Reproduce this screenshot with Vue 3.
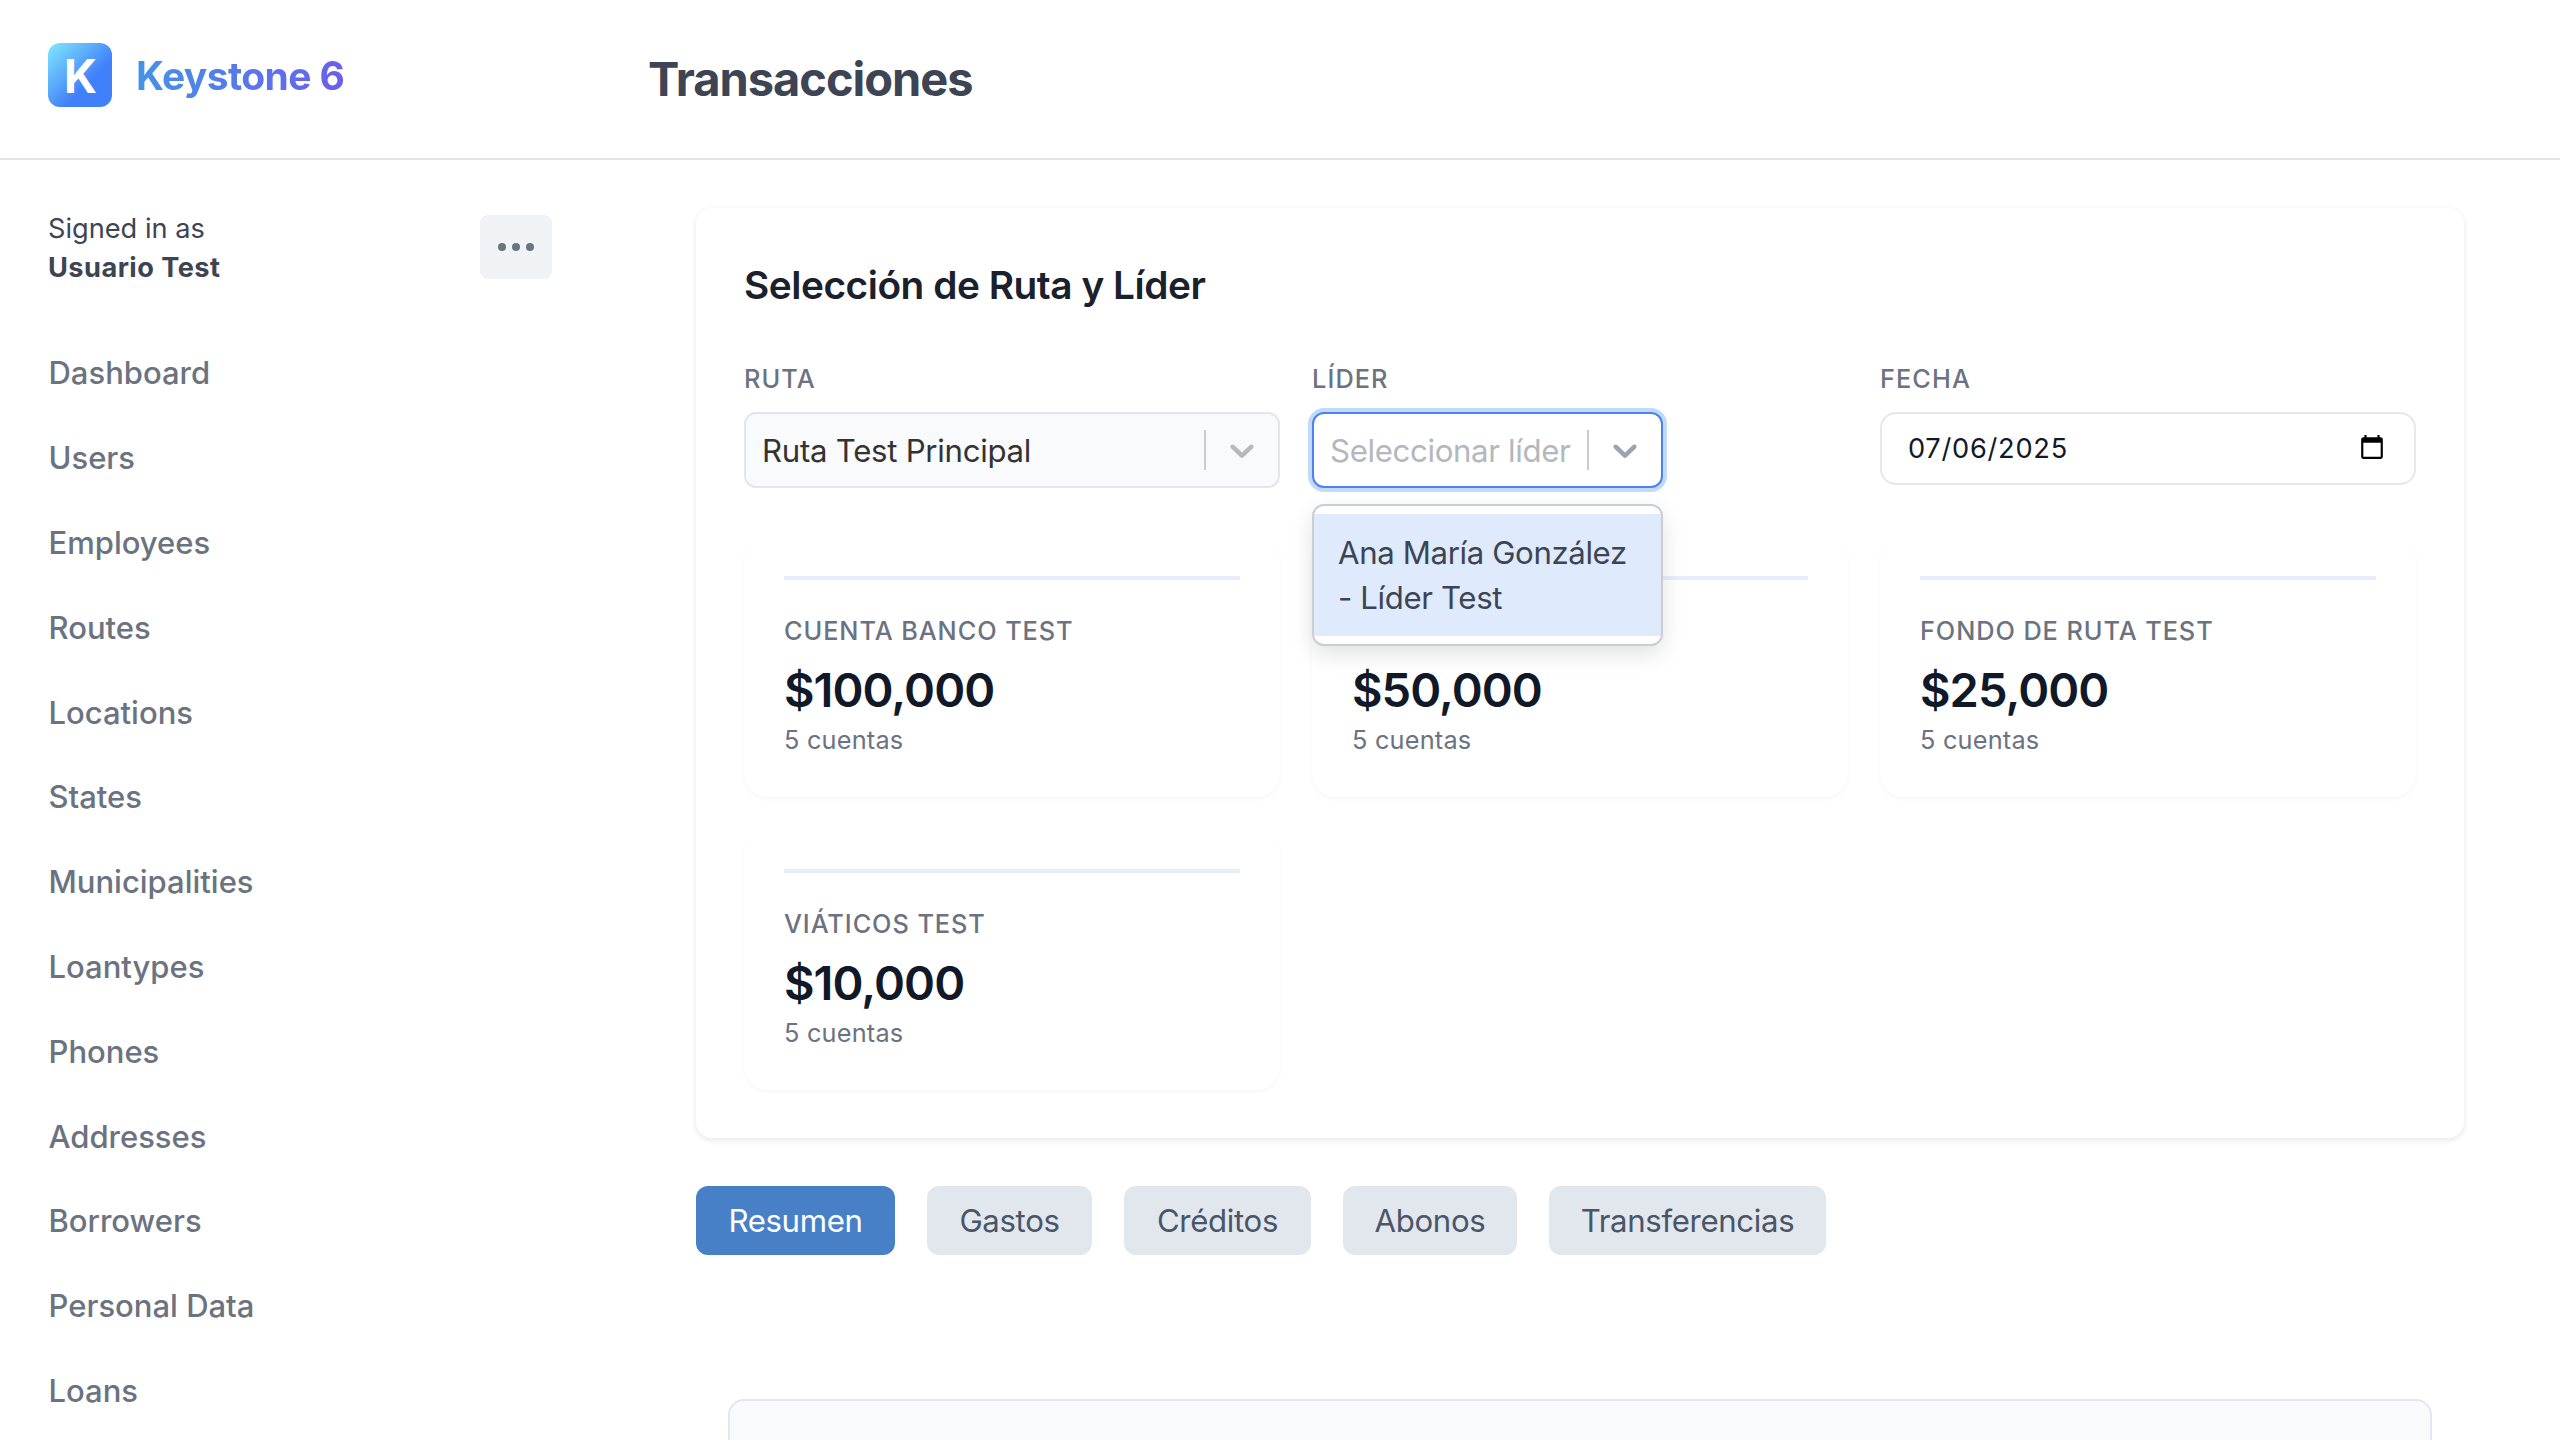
<script setup>
import { ref } from 'vue'

const navItems = [
  'Dashboard', 'Users', 'Employees', 'Routes', 'Locations', 'States', 'Municipalities',
  'Loantypes', 'Phones', 'Addresses', 'Borrowers', 'Personal Data', 'Loans',
]

const accounts = [
  { name: 'Cuenta Banco Test', amount: '$100,000', count: 5 },
  { name: 'Caja Efectivo Test', amount: '$50,000', count: 5 },
  { name: 'Fondo de Ruta Test', amount: '$25,000', count: 5 },
  { name: 'Viáticos Test', amount: '$10,000', count: 5 },
]

const tabs = [
  { label: 'Resumen', width: 199 },
  { label: 'Gastos', width: 165 },
  { label: 'Créditos', width: 187 },
  { label: 'Abonos', width: 174 },
  { label: 'Transferencias', width: 277 },
]
const activeTab = ref('Resumen')
</script>

<template>
  <div class="page">
    <header class="header">
      <div class="brand">
        <div class="logo"><span>K</span></div>
        <span class="brand-name">Keystone 6</span>
      </div>
      <h1 class="page-title">Transacciones</h1>
    </header>

    <div class="body">
      <aside class="sidebar">
        <div class="user">
          <div class="user-text">
            <span>Signed in as</span>
            <strong>Usuario Test</strong>
          </div>
          <button class="more" aria-label="Links and signout">
            <svg width="36" height="8" viewBox="0 0 36 8">
              <circle cx="4" cy="4" r="4" /><circle cx="18" cy="4" r="4" /><circle cx="32" cy="4" r="4" />
            </svg>
          </button>
        </div>
        <nav class="nav">
          <a v-for="item in navItems" :key="item">{{ item }}</a>
        </nav>
      </aside>

      <main class="main">
        <section class="card">
          <h2>Selección de Ruta y Líder</h2>

          <div class="grid filters">
            <div class="field">
              <label>RUTA</label>
              <div class="select filled">
                <span class="value">Ruta Test Principal</span>
                <span class="separator"></span>
                <span class="indicator">
                  <svg width="40" height="40" viewBox="0 0 20 20"><path d="M4.516 7.548c0.436-0.446 1.043-0.481 1.576 0l3.908 3.747 3.908-3.747c0.533-0.481 1.141-0.446 1.574 0 0.436 0.445 0.408 1.197 0 1.615-0.406 0.418-4.695 4.502-4.695 4.502-0.217 0.223-0.502 0.335-0.787 0.335s-0.57-0.112-0.789-0.335c0 0-4.287-4.084-4.695-4.502s-0.436-1.17 0-1.615z" /></svg>
                </span>
              </div>
            </div>

            <div class="field">
              <label>LÍDER</label>
              <div class="select focused">
                <span class="value placeholder">Seleccionar líder</span>
                <span class="separator"></span>
                <span class="indicator">
                  <svg width="40" height="40" viewBox="0 0 20 20"><path d="M4.516 7.548c0.436-0.446 1.043-0.481 1.576 0l3.908 3.747 3.908-3.747c0.533-0.481 1.141-0.446 1.574 0 0.436 0.445 0.408 1.197 0 1.615-0.406 0.418-4.695 4.502-4.695 4.502-0.217 0.223-0.502 0.335-0.787 0.335s-0.57-0.112-0.789-0.335c0 0-4.287-4.084-4.695-4.502s-0.436-1.17 0-1.615z" /></svg>
                </span>
                <div class="menu">
                  <div class="option">Ana María González - Líder Test</div>
                </div>
              </div>
            </div>

            <div class="field">
              <label>FECHA</label>
              <div class="date">
                <span>07/06/2025</span>
                <svg width="26" height="26" viewBox="0 0 24 24"><path d="M20 3h-1V1h-2v2H7V1H5v2H4c-1.1 0-2 .9-2 2v16c0 1.1.9 2 2 2h16c1.1 0 2-.9 2-2V5c0-1.1-.9-2-2-2zm0 18H4V8h16v13z" /></svg>
              </div>
            </div>
          </div>

          <div class="grid">
            <article v-for="a in accounts" :key="a.name" class="account">
              <div class="bar"></div>
              <div class="account-name">{{ a.name }}</div>
              <div class="amount">{{ a.amount }}</div>
              <div class="count">{{ a.count }} cuentas</div>
            </article>
          </div>
        </section>

        <div class="tabs">
          <button
            v-for="t in tabs"
            :key="t.label"
            class="tab"
            :class="{ active: t.label === activeTab }"
            :style="{ width: t.width + 'px' }"
            @click="activeTab = t.label"
          >{{ t.label }}</button>
        </div>

        <section class="panel"></section>
      </main>
    </div>
  </div>
</template>

<style>
body {
  background: #fff;
  overflow: hidden;
}
</style>

<style scoped>
.page {
  width: 2560px;
  height: 1440px;
  overflow: hidden;
  display: flex;
  flex-direction: column;
  font-family: Inter, "Liberation Sans", sans-serif;
  color: #3d4454;
  background: #fff;
}
.page * {
  box-sizing: border-box;
}
button {
  border: 0;
  padding: 0;
  font: inherit;
}
.header {
  height: 160px;
  flex: none;
  display: flex;
  align-items: center;
  border-bottom: 2px solid #e1e5e9;
}
.brand {
  width: 600px;
  padding: 0 0 8px 48px;
  display: flex;
  align-items: center;
  gap: 24px;
}
.logo {
  width: 64px;
  height: 64px;
  border-radius: 12px;
  background: linear-gradient(135deg, #7fe6fb 2%, #4180fb 63%);
  color: #fff;
  font-size: 46px;
  font-weight: 700;
  line-height: 66px;
  padding-left: 16px;
}
.brand-name {
  font-size: 39px;
  font-weight: 700;
  line-height: 48px;
  letter-spacing: -0.6px;
  padding-top: 2px;
  background: linear-gradient(90deg, #4493e6, #6a5fec);
  -webkit-background-clip: text;
  background-clip: text;
  color: transparent;
}
.page-title {
  margin: 0 0 0 48px;
  font-size: 47px;
  font-weight: 700;
  line-height: 56px;
  letter-spacing: -1.02px;
}
.body {
  flex: 1;
  min-height: 0;
  display: flex;
}
.sidebar {
  width: 600px;
  flex: none;
}
.user {
  width: 552px;
  padding: 48px 0 0 48px;
  display: flex;
  justify-content: space-between;
  align-items: center;
}
.user-text {
  display: flex;
  flex-direction: column;
  padding-top: 1px;
  font-size: 27.2px;
  line-height: 39px;
  height: 78px;
}
.user-text strong {
  letter-spacing: 0.45px;
}
.more {
  width: 72px;
  height: 64px;
  border-radius: 8px;
  background: #eff3f6;
  display: flex;
  align-items: center;
  justify-content: center;
}
.more svg {
  fill: #6b7280;
}
.nav {
  padding: 45.4px 0 0 48.5px;
  display: flex;
  flex-direction: column;
}
.nav a {
  height: 84.8px;
  line-height: 84.8px;
  font-size: 31px;
  font-weight: 500;
  color: #6b7280;
}
.main {
  width: 1768px;
  margin-left: 96px;
  padding-top: 48px;
}
.card {
  height: 930px;
  padding: 48px;
  border-radius: 16px;
  background: #fff;
  box-shadow: 0 2px 6px rgba(0, 0, 0, 0.1);
}
.card h2 {
  margin: 0 0 55px;
  font-size: 38.8px;
  font-weight: 600;
  line-height: 58px;
  letter-spacing: -0.46px;
  color: #1a202c;
}
.grid {
  display: grid;
  grid-template-columns: repeat(3, 536px);
  gap: 32px;
}
.filters {
  margin-bottom: 48px;
}
.field label {
  display: block;
  height: 43px;
  line-height: 20px;
  font-size: 25.3px;
  font-weight: 500;
  letter-spacing: 1.1px;
  color: #6b7280;
}
.select {
  position: relative;
  height: 76px;
  display: flex;
  align-items: center;
  border: 2px solid #e2e5e9;
  border-radius: 12px;
  background: #fff;
}
.select.filled {
  background: #f9fafc;
}
.select.focused {
  width: 351px;
  border-color: #4b82ee;
  box-shadow: 0 0 0 4px #c2dafa;
}
.value {
  flex: 1;
  padding: 2px 0 0 16px;
  font-size: 31.2px;
  line-height: 44px;
  letter-spacing: -0.28px;
  color: #333;
  white-space: nowrap;
}
.placeholder {
  letter-spacing: -0.35px;
  color: #b3b7be;
}
.separator {
  width: 2px;
  height: 40px;
  background: #ccc;
}
.indicator {
  padding: 0 16px;
  height: 40px;
}
.indicator svg {
  fill: #b5b9c0;
}
.focused .indicator svg {
  fill: #9ca3af;
}
.menu {
  position: absolute;
  z-index: 2;
  top: 90px;
  left: -2px;
  width: 351px;
  padding: 8px 0;
  border: 2px solid #c9cdd4;
  border-radius: 12px;
  background: #fff;
  box-shadow: 0 8px 22px rgba(0, 0, 0, 0.12);
}
.option {
  padding: 17px 24px 15px;
  background: #dfeafd;
  font-size: 31.2px;
  line-height: 44.8px;
  letter-spacing: -0.38px;
  color: #3d4454;
}
.date {
  height: 73px;
  padding: 0 29px 0 26px;
  display: flex;
  align-items: center;
  justify-content: space-between;
  border: 2px solid #e5e7eb;
  border-radius: 16px;
  font-size: 27.2px;
  letter-spacing: 0.75px;
  color: #111827;
}
.date svg {
  fill: #000;
  margin-top: -3px;
}
.account {
  height: 261px;
  padding: 40px;
  border-radius: 24px;
  background: #fff;
  box-shadow: 0 2px 4px rgba(0, 0, 0, 0.04);
}
.bar {
  height: 4px;
  margin-bottom: 33.5px;
  background: #e8eef9;
}
.account-name {
  font-size: 25.3px;
  font-weight: 500;
  line-height: 34px;
  letter-spacing: 0.93px;
  text-transform: uppercase;
  color: #6b7280;
  margin-bottom: 18.5px;
}
.amount {
  font-size: 47px;
  font-weight: 600;
  line-height: 48px;
  letter-spacing: -0.95px;
  color: #111827;
  margin-bottom: 9px;
}
.count {
  font-size: 25.3px;
  line-height: 34px;
  letter-spacing: 0.2px;
  color: #6b7280;
}
.tabs {
  margin-top: 48px;
  display: flex;
  gap: 32px;
}
.tab {
  height: 69px;
  border-radius: 12px;
  background: #e2e7ee;
  color: #4a5568;
  font-size: 31.2px;
  letter-spacing: -0.35px;
  text-align: center;
}
.tab.active {
  background: #4880c8;
  color: #fff;
}
.panel {
  margin: 144px 32px 0;
  height: 200px;
  border: 2px solid #e2e7ee;
  border-radius: 16px;
  background: #f8fafc;
}
</style>
